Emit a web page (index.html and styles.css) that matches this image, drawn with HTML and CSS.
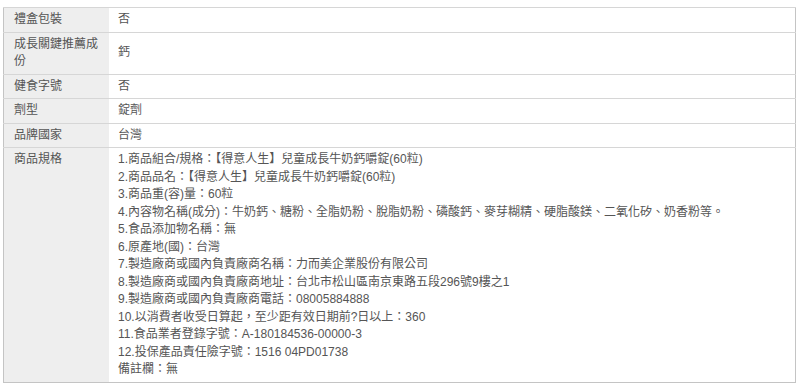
FILE: index.html
```html
<!DOCTYPE html>
<html lang="zh-Hant">
<head>
<meta charset="utf-8">
<link rel="stylesheet" href="styles.css">
</head>
<body>
<table class="spec">
  <tr><th>禮盒包裝</th><td>否</td></tr>
  <tr><th>成長關鍵推薦成份</th><td>鈣</td></tr>
  <tr><th>健食字號</th><td>否</td></tr>
  <tr><th>劑型</th><td>錠劑</td></tr>
  <tr><th>品牌國家</th><td>台灣</td></tr>
  <tr><th>商品規格</th><td>1.商品組合/規格：【得意人生】兒童成長牛奶鈣嚼錠(60粒)<br>2.商品品名：【得意人生】兒童成長牛奶鈣嚼錠(60粒)<br>3.商品重(容)量：60粒<br>4.內容物名稱(成分)：牛奶鈣、糖粉、全脂奶粉、脫脂奶粉、磷酸鈣、麥芽糊精、硬脂酸鎂、二氧化矽、奶香粉等。<br>5.食品添加物名稱：無<br>6.原產地(國)：台灣<br>7.製造廠商或國內負責廠商名稱：力而美企業股份有限公司<br>8.製造廠商或國內負責廠商地址：台北市松山區南京東路五段296號9樓之1<br>9.製造廠商或國內負責廠商電話：08005884888<br>10.以消費者收受日算起，至少距有效日期前?日以上：360<br>11.食品業者登錄字號：A-180184536-00000-3<br>12.投保產品責任險字號：1516 04PD01738<br>備註欄：無</td></tr>
</table>
</body>
</html>
```
FILE: styles.css
```css
html, body {
  margin: 0;
  padding: 0;
  background: #fff;
}
body {
  padding: 7px 4px 0 3px;
  font-family: "Liberation Sans", "Noto Sans CJK TC", sans-serif;
  font-size: 12px;
  line-height: 17.5px;
  color: #555;
}
.spec {
  width: 793px;
  border-collapse: collapse;
  border: 1px solid #c4c4c4;
}
.spec tr {
  border-top: 1px solid #d6d6d6;
}
.spec th,
.spec td {
  text-align: left;
  vertical-align: top;
  font-weight: normal;
  padding: 3px 9px 3px 9px;
}
.spec th {
  width: 86px;
  padding-left: 10px;
  background: #eeeeee;
}
.spec td {
  vertical-align: middle;
}
.spec th {
  vertical-align: top;
}
```
